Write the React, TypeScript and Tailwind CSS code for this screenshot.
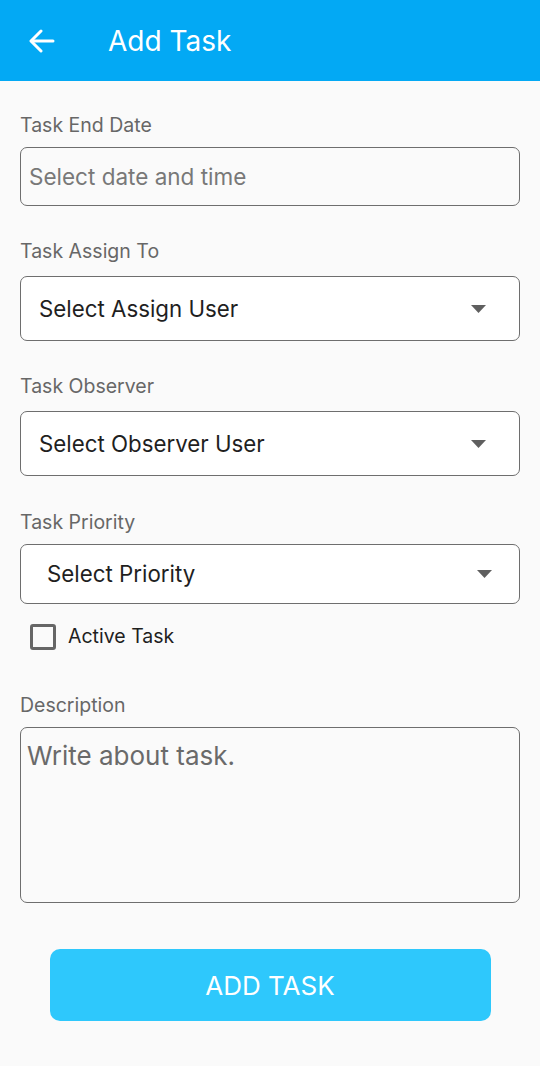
const font = { fontFamily: 'Inter, Roboto, "Noto Sans", sans-serif' };

function Caret() {
    return (
        <svg width="15" height="8" viewBox="0 0 15 8" className="shrink-0">
            <path d="M0 0 L15 0 L7.5 8 Z" fill="#5f5f5f" />
        </svg>
    );
}

function Label({ children }: { children: React.ReactNode }) {
    return <div className="text-[19.5px] leading-[24px] text-[#676767]">{children}</div>;
}

function SelectBox({ text, pl, pr, h }: { text: string; pl: string; pr: string; h: string }) {
    return (
        <div className={`flex items-center justify-between rounded-[7px] border-[1.5px] border-[#6e6e6e] bg-white ${pl} ${pr} ${h}`}>
            <span className="text-[22.3px] text-[#1f1f1f]">{text}</span>
            <Caret />
        </div>
    );
}

export default function App() {
    return (
        <div className="min-h-[1066px] w-[540px] bg-[#fafafa]" style={font}>
            {/* App bar */}
            <div className="flex h-[81px] items-center bg-[#03a9f4] pl-[29px]">
                <svg width="26" height="24" viewBox="0 0 26 24" fill="none" stroke="white" strokeWidth="3" strokeLinecap="round" strokeLinejoin="round">
                    <path d="M24 12H3" />
                    <path d="M12 2L2 12l10 10" />
                </svg>
                <span className="ml-[53px] text-[28px] text-white">Add Task</span>
            </div>

            <div className="flex flex-col px-5 pt-[32px]">
                <Label>Task End Date</Label>
                <div className="mt-[10px] flex h-[59px] items-center rounded-[7px] border-[1.5px] border-[#6e6e6e] pl-[8px]">
                    <span className="text-[22.5px] text-[#787878]">Select date and time</span>
                </div>

                <div className="mt-[33px]">
                    <Label>Task Assign To</Label>
                </div>
                <div className="mt-[13px]">
                    <SelectBox text="Select Assign User" pl="pl-[18px]" pr="pr-[33px]" h="h-[65px]" />
                </div>

                <div className="mt-[33px]">
                    <Label>Task Observer</Label>
                </div>
                <div className="mt-[13px]">
                    <SelectBox text="Select Observer User" pl="pl-[18px]" pr="pr-[33px]" h="h-[65px]" />
                </div>

                <div className="mt-[34px]">
                    <Label>Task Priority</Label>
                </div>
                <div className="mt-[10px]">
                    <SelectBox text="Select Priority" pl="pl-[26px]" pr="pr-[27px]" h="h-[60px]" />
                </div>

                <div className="mt-[18px] flex items-center pl-[10px]">
                    <div className="h-[26px] w-[26px] rounded-[3px] border-[3px] border-[#666666]" />
                    <span className="ml-[12px] text-[19.5px] text-[#1f1f1f]">Active Task</span>
                </div>

                <div className="mt-[42px]">
                    <Label>Description</Label>
                </div>
                <div className="mt-[10px] h-[176px] rounded-[7px] border-[1.5px] border-[#6e6e6e] pl-[6px] pt-[8px]">
                    <span className="text-[26px] text-[#6a6a6a]">Write about task.</span>
                </div>

                <div className="mt-[46px] flex justify-center">
                    <button className="flex h-[72px] w-[441px] items-center justify-center rounded-[10px] bg-[#2ec8fc] text-[26px] text-white">
                        ADD TASK
                    </button>
                </div>
            </div>
        </div>
    );
}
